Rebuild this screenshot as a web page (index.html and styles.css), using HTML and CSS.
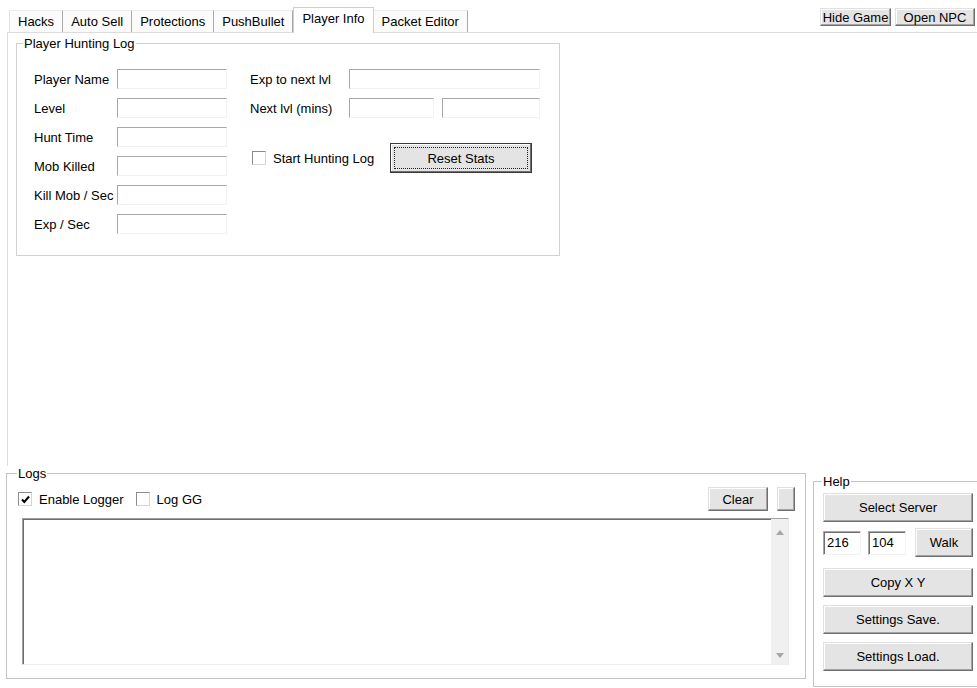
FILE: index.html
```html
<!DOCTYPE html>
<html lang="en">
<head>
  <meta charset="UTF-8">
  <title>Player Info</title>
  <link rel="stylesheet" href="styles.css">
</head>
<body>
  <div class="app">
    <header class="topbar">
      <nav class="tabs">
        <span class="tab">Hacks</span>
        <span class="tab">Auto Sell</span>
        <span class="tab">Protections</span>
        <span class="tab">PushBullet</span>
        <span class="tab active">Player Info</span>
        <span class="tab">Packet Editor</span>
      </nav>
      <div class="winbtns">
        <button class="btn hide-game">Hide Game</button>
        <button class="btn open-npc">Open NPC</button>
      </div>
    </header>

    <section class="page">
      <fieldset class="group hunt">
        <legend>Player Hunting Log</legend>
        <div class="hunt-body">
          <div class="stats">
            <label>Player Name</label><span class="field"></span>
            <label>Level</label><span class="field"></span>
            <label>Hunt Time</label><span class="field"></span>
            <label>Mob Killed</label><span class="field"></span>
            <label>Kill Mob / Sec</label><span class="field"></span>
            <label>Exp / Sec</label><span class="field"></span>
          </div>
          <div class="progress">
            <div class="prow">
              <label>Exp to next lvl</label>
              <span class="field f-long"></span>
            </div>
            <div class="prow">
              <label>Next lvl (mins)</label>
              <span class="field f-mins"></span>
              <span class="field f-secs"></span>
            </div>
            <div class="actions">
              <label class="check start-log"><span class="box"></span>Start Hunting Log</label>
              <button class="btn default reset">Reset Stats</button>
            </div>
          </div>
        </div>
      </fieldset>
    </section>

    <div class="bottom">
      <fieldset class="group logs">
        <legend>Logs</legend>
        <div class="log-tools">
          <label class="check"><span class="box checked"><svg viewBox="0 0 11 11" width="11" height="11"><path d="M2 5.5 L4.3 8 L9 2.5" fill="none" stroke="#000" stroke-width="2"/></svg></span>Enable Logger</label>
          <label class="check log-gg"><span class="box"></span>Log GG</label>
          <button class="btn clear">Clear</button>
          <button class="btn tiny"></button>
        </div>
        <div class="logbox">
          <div class="log-text"></div>
          <div class="vscroll">
            <span class="arrow up"></span>
            <span class="arrow down"></span>
          </div>
        </div>
      </fieldset>

      <fieldset class="group help">
        <legend>Help</legend>
        <div class="help-body">
          <button class="btn wide">Select Server</button>
          <div class="coords">
            <span class="field sunken">216</span>
            <span class="field sunken">104</span>
            <button class="btn walk">Walk</button>
          </div>
          <button class="btn wide copy">Copy X Y</button>
          <button class="btn wide stack">Settings Save.</button>
          <button class="btn wide stack">Settings Load.</button>
        </div>
      </fieldset>
    </div>
  </div>
</body>
</html>
```

FILE: styles.css
```css
body {
  margin: 0;
  background: #fff;
  font-family: "Liberation Sans", Arial, sans-serif;
  font-size: 13px;
  color: #000;
}
.app {
  width: 977px;
  height: 688px;
  overflow: hidden;
}

/* tab strip + window buttons */
.topbar {
  display: flex;
  justify-content: space-between;
  height: 32px;
}
.tabs {
  display: flex;
  align-items: flex-end;
  padding-left: 9px;
}
.tab {
  height: 21px;
  line-height: 21px;
  padding: 0 8px;
  border-top: 1px solid #ececec;
  border-right: 1px solid #a9a9a9;
  background: #fbfbfb;
  white-space: nowrap;
}
.tab:first-child {
  border-left: 1px solid #e2e2e2;
}
.tab.active {
  position: relative;
  z-index: 1;
  height: 25px;
  line-height: 22px;
  margin-bottom: -1px;
  border: 1px solid #cfcfcf;
  border-bottom: none;
  background: #fff;
}
.winbtns {
  display: flex;
  gap: 4px;
  padding: 8px 2px 0 0;
}

/* buttons */
.btn {
  font: inherit;
  color: #000;
  padding: 0;
  background: #e4e4e4;
  border: 1px solid;
  border-color: #e0e0e0 #6f6f6f #6f6f6f #e0e0e0;
  box-shadow: inset -1px -1px 0 #a3a3a3, inset 1px 1px 0 #fff;
}
.hide-game { width: 71px; height: 18px; }
.open-npc { width: 80px; height: 18px; }
.btn.default {
  position: relative;
  border-color: #3a3a3a;
  box-shadow: inset -1px -1px 0 #6f6f6f, inset 1px 1px 0 #fff;
}
.btn.default::after {
  content: "";
  position: absolute;
  inset: 3px;
  border: 1px dotted #222;
}

/* tab page */
.page {
  box-sizing: border-box;
  height: 434px;
  margin-left: 7px;
  padding: 3px 0 0 8px;
  border-left: 1px solid #dcdcdc;
  border-top: 1px solid #dcdcdc;
}
.group {
  box-sizing: border-box;
  flex-shrink: 0;
  margin: 0;
  padding: 0;
  border: 1px solid #c4c4c4;
}
.group legend {
  padding: 0 1px;
  line-height: 15px;
}
.hunt {
  width: 544px;
  height: 220px;
  border-color: #d0d0d0;
}
.hunt legend { margin-left: 6px; }
.hunt-body {
  display: flex;
  padding: 18px 0 0 17px;
}
.stats {
  display: grid;
  grid-template-columns: 83px 110px;
  grid-auto-rows: 20px;
  row-gap: 9px;
  align-items: center;
}
.field {
  box-sizing: border-box;
  display: block;
  height: 20px;
  background: #fff;
  border-top: 1px solid #a8a8a8;
  border-left: 1px solid #a8a8a8;
  border-right: 1px solid #f2f2f2;
  border-bottom: 1px solid #f2f2f2;
}
.progress {
  margin-left: 23px;
}
.prow {
  display: flex;
  align-items: center;
  height: 20px;
  margin-bottom: 9px;
}
.prow label { width: 99px; }
.f-long { width: 191px; }
.f-mins { width: 85px; }
.f-secs { width: 98px; margin-left: 8px; }
.actions {
  display: flex;
  align-items: center;
  height: 30px;
  margin-top: 25px;
}
.check {
  display: flex;
  align-items: center;
  gap: 7px;
}
.start-log {
  width: 138px;
  margin-left: 2px;
}
.box {
  box-sizing: border-box;
  display: flex;
  align-items: center;
  justify-content: center;
  width: 14px;
  height: 14px;
  background: #fff;
  border: 1px solid;
  border-color: #8c8c8c #d6d6d6 #d6d6d6 #8c8c8c;
}
.reset {
  width: 142px;
  height: 30px;
}

/* logs + help */
.bottom {
  display: flex;
  align-items: flex-start;
}
.logs {
  width: 800px;
  height: 213px;
  margin-left: 6px;
}
.logs legend { margin-left: 10px; }
.log-tools {
  display: flex;
  align-items: center;
  height: 24px;
  margin-top: 6px;
  padding: 0 10px 0 11px;
}
.log-gg { margin-left: 12px; }
.clear {
  width: 60px;
  height: 24px;
  margin-left: auto;
}
.tiny {
  width: 18px;
  height: 24px;
  margin-left: 9px;
}
.logbox {
  box-sizing: border-box;
  display: flex;
  height: 147px;
  margin: 7px 16px 0 15px;
  border: 1px solid;
  border-color: #a0a0a0 #ececec #ececec #a0a0a0;
  box-shadow: inset 1px 1px 0 #6e6e6e;
}
.log-text { flex: 1; }
.vscroll {
  display: flex;
  flex-direction: column;
  justify-content: space-between;
  align-items: center;
  width: 17px;
  padding: 11px 0 6px;
  background: #f0f0f0;
}
.arrow {
  width: 0;
  height: 0;
  border-left: 4px solid transparent;
  border-right: 4px solid transparent;
}
.arrow.up { border-bottom: 5px solid #a6a6a6; }
.arrow.down { border-top: 5px solid #a6a6a6; }

.help {
  width: 170px;
  height: 213px;
  margin: 8px 0 0 7px;
}
.help legend { margin-left: 8px; }
.help-body {
  padding: 4px 0 0 9px;
}
.btn.wide {
  display: block;
  width: 150px;
  height: 29px;
}
.coords {
  display: flex;
  align-items: center;
  width: 150px;
  height: 29px;
  margin-top: 6px;
}
.field.sunken {
  width: 38px;
  height: 24px;
  line-height: 22px;
  padding-left: 3px;
  margin-right: 7px;
  box-shadow: inset 1px 1px 0 #707070;
}
.walk {
  width: 58px;
  height: 29px;
  margin-left: auto;
}
.btn.copy { margin-top: 11px; }
.btn.stack { margin-top: 8px; }
```
